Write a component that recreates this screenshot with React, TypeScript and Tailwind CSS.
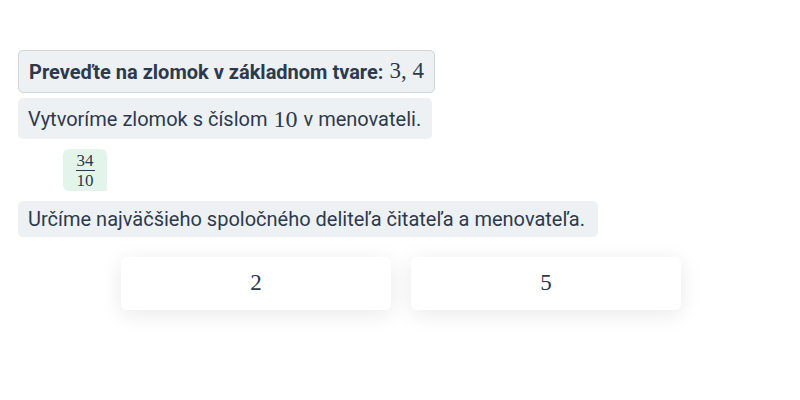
export default function App() {
  const text = "font-['Roboto',sans-serif] text-[#2d3a4b]";
  const math = "font-['Liberation_Serif',serif]";

  return (
    <div className={`min-h-[400px] w-[800px] bg-white pl-[18px] pt-[50px] ${text}`}>
      <div className="flex flex-col items-start">
        <div className="flex h-[43px] items-center rounded-[5px] border border-[#cfd7dd] bg-[#eef1f3] pl-[10px] pr-[10px] text-[20px] font-bold">
          Preveďte na zlomok v základnom tvare:
          <span className={`${math} ml-[6px] text-[23px] font-normal`}>3, 4</span>
        </div>

        <div className="mt-[5px] flex h-[41px] items-center rounded-[5px] bg-[#eef1f3] pl-[10px] pr-[11px] text-[20px]">
          Vytvoríme zlomok s číslom
          <span className={`${math} mx-[6px] text-[24px]`}>10</span>
          v menovateli.
        </div>

        <div className="ml-[45px] mt-[10px] flex h-[42px] w-[44px] items-center justify-center rounded-[6px] rounded-br-none bg-[#e3f5ea]">
          <div className={`${math} flex flex-col items-center text-[17px] leading-[15px]`}>
            <span>34</span>
            <span className="my-[2px] h-px w-[19px] bg-[#2d3a4b]" />
            <span>10</span>
          </div>
        </div>

        <div className="mt-[10px] flex h-[36px] items-center rounded-[5px] bg-[#eef1f3] pl-[10px] pr-[13px] text-[20px]">
          Určíme najväčšieho spoločného deliteľa čitateľa a menovateľa.
        </div>
      </div>

      <div className="mt-[20px] flex gap-[20px] pl-[103px]">
        {["2", "5"].map((n) => (
          <div
            key={n}
            className={`${math} flex h-[53px] w-[270px] items-center justify-center rounded-[6px] bg-white text-[23px] shadow-[0_4px_22px_rgba(0,0,0,0.09)]`}
          >
            {n}
          </div>
        ))}
      </div>
    </div>
  );
}
